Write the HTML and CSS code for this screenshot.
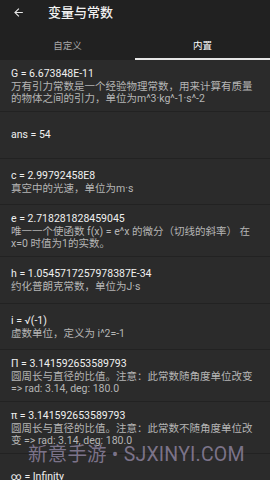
FILE: index.html
```html
<!DOCTYPE html>
<html lang="zh-CN">
<head>
<meta charset="utf-8">
<link rel="stylesheet" href="styles.css">
</head>
<body>
<div class="app">
  <header class="toolbar">
    <svg class="back" viewBox="0 0 24 24" width="13" height="13"><path d="M20 11H7.83l5.59-5.59L12 4l-8 8 8 8 1.41-1.41L7.83 13H20v-2z" fill="#e8e8e8"/></svg>
    <span class="title">变量与常数</span>
  </header>
  <nav class="tabs">
    <div class="tab">自定义</div>
    <div class="tab active">内置</div>
  </nav>
  <ul class="list">
    <li class="item"><div class="name">G = 6.673848E-11</div><div class="desc">万有引力常数是一个经验物理常数，用来计算有质量的物体之间的引力，单位为m^3·kg^-1·s^-2</div></li>
    <li class="item"><div class="name">ans = 54</div></li>
    <li class="item"><div class="name">c = 2.99792458E8</div><div class="desc">真空中的光速，单位为m·s</div></li>
    <li class="item"><div class="name">e = 2.718281828459045</div><div class="desc">唯一一个使函数 f(x) = e^x 的微分（切线的斜率） 在 x=0 时值为1的实数。</div></li>
    <li class="item"><div class="name">h = 1.0545717257978387E-34</div><div class="desc">约化普朗克常数，单位为J·s</div></li>
    <li class="item"><div class="name">i = √(-1)</div><div class="desc">虚数单位，定义为 i^2=-1</div></li>
    <li class="item"><div class="name">Π = 3.141592653589793</div><div class="desc">圆周长与直径的比值。注意：此常数随角度单位改变 =&gt; rad: 3.14, deg: 180.0</div></li>
    <li class="item"><div class="name">π = 3.141592653589793</div><div class="desc">圆周长与直径的比值。注意：此常数不随角度单位改变 =&gt; rad: 3.14, deg: 180.0</div></li>
    <li class="item"><div class="name">∞ = Infinity</div></li>
  </ul>
  <div class="watermark">新意手游 • SJXINYI.COM</div>
</div>
</body>
</html>
```
FILE: styles.css
```css
html, body {
  margin: 0;
  padding: 0;
  background: #2b2b2b;
}
body {
  font-family: Roboto, "Noto Sans CJK SC", sans-serif;
  width: 270px;
  height: 480px;
  overflow: hidden;
}
.app {
  position: relative;
  width: 270px;
  height: 480px;
  overflow: hidden;
}
.toolbar {
  height: 30px;
  background: #212121;
  display: flex;
  align-items: flex-start;
  padding-top: 4px;
  box-sizing: border-box;
}
.back {
  margin-left: 12px;
  margin-top: 2px;
}
.title {
  margin-left: 23px;
  color: #f2f2f2;
  font-size: 13px;
  line-height: 17px;
  font-weight: 500;
}
.tabs {
  height: 30px;
  background: #212121;
  display: flex;
}
.tab {
  flex: 1;
  display: flex;
  align-items: center;
  justify-content: center;
  color: #a8a8a8;
  font-size: 9.5px;
  box-sizing: border-box;
  border-bottom: 2px solid transparent;
  padding-top: 1px;
}
.tab.active {
  color: #ffffff;
  border-bottom-color: #e6e6e6;
}
.list {
  list-style: none;
  margin: 0;
  padding: 0;
}
.item {
  min-height: 46.5px;
  box-sizing: border-box;
  padding: 6px 11px;
  display: flex;
  flex-direction: column;
  justify-content: center;
  border-bottom: 1px solid #222222;
}
.name {
  color: #f0f0f0;
  font-size: 10.5px;
  line-height: 15px;
}
.desc {
  color: #b5b5b5;
  font-size: 10.5px;
  line-height: 12px;
}
.watermark {
  position: absolute;
  left: 28px;
  top: 442px;
  font-size: 19.5px;
  line-height: 26px;
  color: rgba(160, 148, 180, 0.7);
  white-space: nowrap;
  letter-spacing: 0.2px;
}
```
